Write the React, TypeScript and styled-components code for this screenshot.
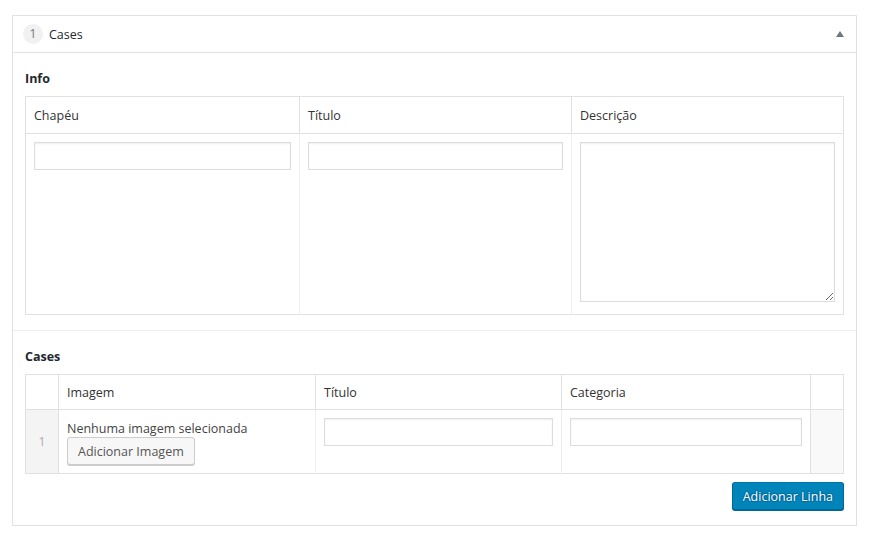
import React from "react";
import styled, { createGlobalStyle } from "styled-components";

const Global = createGlobalStyle`
  html, body { margin: 0; padding: 0; background: #fff; }
  body {
    font-family: "Open Sans", "Liberation Sans", sans-serif;
    font-size: 12.5px;
    line-height: 20px;
    color: #444;
  }
  * { box-sizing: border-box; }
`;

const Page = styled.div`
  padding: 15px 13px 0 12px;
`;

const Layout = styled.div`
  width: 845px;
  border: 1px solid #e1e1e1;
  background: #fff;
`;

const LayoutHeader = styled.div`
  display: flex;
  align-items: center;
  height: 37px;
  padding: 0 10px;
  border-bottom: 1px solid #e1e1e1;
  color: #23282d;
`;

const OrderBadge = styled.span`
  display: inline-flex;
  align-items: center;
  justify-content: center;
  width: 20px;
  height: 20px;
  border-radius: 50%;
  background: #f1f1f1;
  color: #777;
  font-size: 12px;
  margin-right: 6px;
`;

const Title = styled.span`
  flex: 1;
  font-size: 12.5px;
  padding-top: 2px;
`;

const Toggle = styled.span`
  width: 0;
  height: 0;
  border-left: 4px solid transparent;
  border-right: 4px solid transparent;
  border-bottom: 6px solid #72777c;
  margin-right: 2px;
`;

const Field = styled.div<{ $divider?: boolean }>`
  padding: 15px 12px;
  border-top: ${(p) => (p.$divider ? "1px solid #eeeeee" : "none")};
`;

const Label = styled.div`
  font-weight: 700;
  font-size: 12.5px;
  color: #23282d;
  line-height: 20px;
  padding-top: 1px;
  margin-bottom: 7px;
`;

const Table = styled.table`
  width: 100%;
  border-collapse: collapse;
  border: 1px solid #e1e1e1;
  table-layout: fixed;
`;

const Th = styled.th<{ $w?: number; $py?: number }>`
  width: ${(p) => (p.$w ? `${p.$w}px` : "auto")};
  text-align: left;
  font-weight: 400;
  color: #333;
  padding: ${(p) => (p.$py ?? 8) + 1}px 8px ${(p) => (p.$py ?? 8) - 1}px;
  line-height: 20px;
  border-left: 1px solid #e1e1e1;
  border-bottom: 1px solid #e1e1e1;
  &:first-child { border-left: none; }
`;

const Td = styled.td<{ $pb?: number }>`
  vertical-align: top;
  padding: 8px 8px ${(p) => p.$pb ?? 8}px;
  border-left: 1px solid #eeeeee;
  &:first-child { border-left: none; }
`;

const OrderCell = styled.td`
  width: 33px;
  background: #f4f4f4;
  color: #aaa;
  text-align: center;
  vertical-align: middle;
  font-size: 12px;
  border-right: 1px solid #e1e1e1;
`;

const RemoveCell = styled.td`
  background: #f9f9f9;
  border-left: 1px solid #e1e1e1;
`;

const TextInput = styled.input`
  display: block;
  width: 100%;
  height: 28px;
  margin: 0;
  padding: 3px 5px;
  border: 1px solid #dddddd;
  box-shadow: inset 0 1px 2px rgba(0, 0, 0, 0.07);
  background: #fff;
  font: inherit;
  color: #32373c;
  outline: none;
`;

const TextArea = styled.textarea`
  display: block;
  width: 100%;
  height: 160px;
  margin: 0;
  padding: 3px 5px;
  border: 1px solid #dddddd;
  box-shadow: inset 0 1px 2px rgba(0, 0, 0, 0.07);
  font: inherit;
  resize: vertical;
  outline: none;
`;

const Empty = styled.div`
  color: #444;
  line-height: 20px;
  padding-top: 1px;
  margin-bottom: -2px;
`;

const Button = styled.button<{ $primary?: boolean }>`
  display: inline-block;
  height: 28px;
  line-height: 26px;
  padding: 1px 10px 0;
  margin: 0;
  font-family: inherit;
  font-size: 12.5px;
  border-radius: 3px;
  border-width: 1px;
  border-style: solid;
  border-color: ${(p) => (p.$primary ? "#0073aa #006799 #006799" : "#cccccc")};
  background: ${(p) => (p.$primary ? "#0085ba" : "#f7f7f7")};
  color: ${(p) => (p.$primary ? "#fff" : "#555")};
  box-shadow: 0 1px 0 ${(p) => (p.$primary ? "#006799" : "#cccccc")};
  text-shadow: ${(p) =>
    p.$primary
      ? "0 -1px 1px #006799, 1px 0 1px #006799, 0 1px 1px #006799, -1px 0 1px #006799"
      : "none"};
  cursor: pointer;
  white-space: nowrap;
`;

const Actions = styled.div`
  display: flex;
  justify-content: flex-end;
  margin-top: 8px;
`;

export default function App() {
  return (
    <>
      <Global />
      <Page>
        <Layout>
          <LayoutHeader>
            <OrderBadge>1</OrderBadge>
            <Title>Cases</Title>
            <Toggle />
          </LayoutHeader>

          <Field>
            <Label>Info</Label>
            <Table>
              <thead>
                <tr>
                  <Th $w={274}>Chapéu</Th>
                  <Th $w={272}>Título</Th>
                  <Th>Descrição</Th>
                </tr>
              </thead>
              <tbody>
                <tr>
                  <Td $pb={12}>
                    <TextInput type="text" />
                  </Td>
                  <Td $pb={12}>
                    <TextInput type="text" />
                  </Td>
                  <Td $pb={12}>
                    <TextArea />
                  </Td>
                </tr>
              </tbody>
            </Table>
          </Field>

          <Field $divider>
            <Label>Cases</Label>
            <Table>
              <thead>
                <tr>
                  <Th $w={33} $py={7} />
                  <Th $w={257} $py={7}>Imagem</Th>
                  <Th $w={246} $py={7}>Título</Th>
                  <Th $py={7}>Categoria</Th>
                  <Th $w={33} $py={7} />
                </tr>
              </thead>
              <tbody>
                <tr>
                  <OrderCell>1</OrderCell>
                  <Td>
                    <Empty>Nenhuma imagem selecionada</Empty>
                    <Button type="button">Adicionar Imagem</Button>
                  </Td>
                  <Td>
                    <TextInput type="text" />
                  </Td>
                  <Td>
                    <TextInput type="text" />
                  </Td>
                  <RemoveCell />
                </tr>
              </tbody>
            </Table>
            <Actions>
              <Button type="button" $primary>
                Adicionar Linha
              </Button>
            </Actions>
          </Field>
        </Layout>
      </Page>
    </>
  );
}
